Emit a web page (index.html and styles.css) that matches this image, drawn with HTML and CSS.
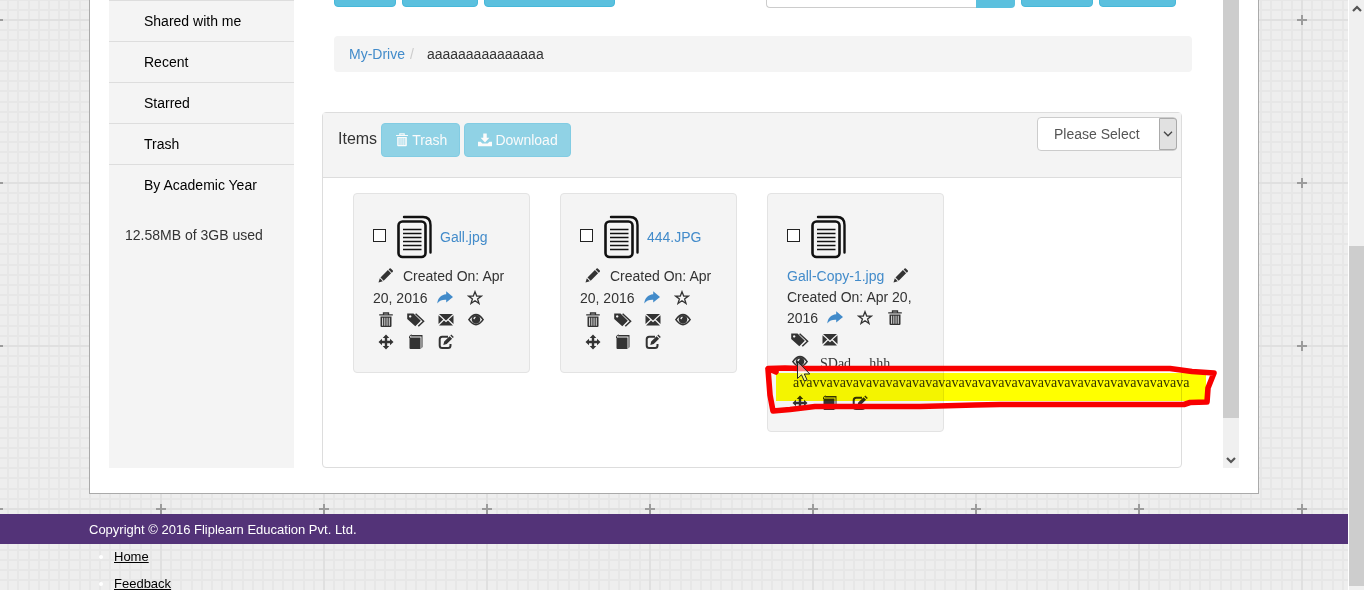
FILE: index.html
```html
<!DOCTYPE html>
<html lang="en">
<head>
<meta charset="utf-8">
<title>My-Drive</title>
<link rel="stylesheet" href="styles.css">
</head>
<body>
<svg class="sprite" aria-hidden="true">
  <symbol id="docs" viewBox="0 0 36 44">
    <rect x="1.5" y="6.5" width="27" height="35.5" rx="4" fill="none" stroke="#111" stroke-width="2.6"/>
    <path d="M7 2H26Q33.5 2 33.5 10V37.5" fill="none" stroke="#111" stroke-width="2.4" stroke-linecap="round"/>
    <path d="M6 14.5H24.500M6 18.500H24.500M6 22.500H24.500M6 26.500H24.500M6 30.500H24.500M6 34.500H24.500" stroke="#111" stroke-width="1.6"/>
  </symbol>
  <symbol id="pencil" viewBox="0 0 16 16"><path d="M.5 14.500l1.300-4.300 3 3zM2.500 9.500L9.900 2.100l3.200 3.200L5.700 12.700zM10.600 1.500l1-1q.6-.5 1.200 0l2 2q.5.6 0 1.200l-1 1z"/></symbol>
  <symbol id="share" viewBox="0 0 16 16"><path d="M9.200 1.300L16 6.900 9.200 12.500V9.700C5.500 9.500 2.500 10.300.3 13.500.6 8.500 3.800 4.500 9.200 4.200z"/></symbol>
  <symbol id="star" viewBox="0 0 16 16"><path d="M8 1.700L9.700 6.100H14.300L10.600 8.900 12 13.500 8 10.700 4 13.500 5.400 8.900 1.700 6.100H6.300z" fill="none" stroke="currentColor" stroke-width="1.300"/></symbol>
  <symbol id="trash" viewBox="0 0 16 16"><path d="M5.500 2.500V1h5v1.500M1.200 2.900h13.600" fill="none" stroke="currentColor" stroke-width="1.300"/><path d="M2.500 4.500h11V14q0 1-1 1h-9q-1 0-1-1zM4.200 5.800V13.800h.9V5.800zM6.400 5.800V13.800h.9V5.800zM8.600 5.800V13.800h.9V5.800zM10.800 5.800V13.800h.9V5.800z" fill-rule="evenodd"/></symbol>
  <symbol id="tags" viewBox="0 0 18 16"><path d="M.2 1.500H6.500L13.800 8.800 8.300 14.300.2 7zM3.200 3.200a1.200 1.200 0 1 0 .01 0z" fill-rule="evenodd"/><path d="M8.600 1.800L16.600 9.200 11.300 14.300" fill="none" stroke="currentColor" stroke-width="1.500"/></symbol>
  <symbol id="mail" viewBox="0 0 16 16"><path d="M1 2H15L8 8.400zM.5 3.200L5.200 7.600 .5 12zM15.500 3.200L10.800 7.600l4.700 4.400zM1 13.500L6 8.500l2 1.800 2-1.800 5 5z"/></symbol>
  <symbol id="eye" viewBox="0 0 16 16"><path d="M.9 7.600Q8-2.400 15.100 7.600 8 17.600.9 7.600z" fill="none" stroke="currentColor" stroke-width="1.600"/><path d="M8 3.100a4.300 4.300 0 1 0 .01 0zM7.300 4.500q-2 .6-2 2.500l1.400.2q0-1.200 1-1.500z" fill-rule="evenodd"/></symbol>
  <symbol id="move" viewBox="0 0 16 16"><path d="M8 .5L11.300 4H9.200v2.800H12V4.700L15.500 8 12 11.300V9.200H9.200V12h2.100L8 15.500 4.700 12h2.100V9.200H4v2.100L.5 8 4 4.700v2.100h2.800V4H4.700z"/></symbol>
  <symbol id="book" viewBox="0 0 16 16"><path d="M3.500 1H14.500V13L13.500 14.500V2.600H3zM1.500 3.400H12.500V15H2.500q-1 0-1-1z"/><path d="M1.500 4V3Q1.500 1 4 1" fill="none" stroke="currentColor"/></symbol>
  <symbol id="edit" viewBox="0 0 16 16"><path d="M10 2.700H4.200Q1.700 2.700 1.700 5.200V11.500Q1.700 14 4.200 14H10Q12.500 14 12.500 11.500V10" fill="none" stroke="currentColor" stroke-width="2"/><path d="M5.300 11L6.200 7.600l5.400-5.400 2.500 2.500L8.700 10.100zM12.300 1.500L13.300.5l2.500 2.400-1 1z"/></symbol>
  <symbol id="download" viewBox="0 0 16 16"><path d="M6 .5h4v5h3L8 10.800 3 5.500h3z"/><path d="M0 10h3l2 2h6l2-2h3v5H0z"/></symbol>
  <symbol id="chevron" viewBox="0 0 10 6"><path d="M1 .8l4 4 4-4" fill="none" stroke="currentColor" stroke-width="1.300"/></symbol>
  <symbol id="chevron-bold" viewBox="0 0 10 7"><path d="M1 1l4 4 4-4" fill="none" stroke="currentColor" stroke-width="2.200"/></symbol>
</svg>

<div class="page">
  <div class="frame">
    <nav class="sidebar" aria-label="Drive">
      <ul class="menu">
        <li><a href="#">Shared with me</a></li>
        <li><a href="#">Recent</a></li>
        <li><a href="#">Starred</a></li>
        <li><a href="#">Trash</a></li>
        <li><a href="#">By Academic Year</a></li>
      </ul>
      <p class="usage">12.58MB of 3GB used</p>
    </nav>

    <main class="content">
      <div class="toolbar">
        <button class="btn w62" aria-label="New"></button>
        <button class="btn w76" aria-label="Upload"></button>
        <button class="btn w131" aria-label="Create folder"></button>
        <form class="search">
          <input type="text" aria-label="Search">
          <button class="search-btn" type="button" aria-label="Search"></button>
        </form>
        <button class="btn w72" aria-label="List"></button>
        <button class="btn w77" aria-label="Grid"></button>
      </div>

      <nav class="breadcrumb" aria-label="Breadcrumb">
        <a href="#">My-Drive</a><span class="slash">/</span><span>aaaaaaaaaaaaaaa</span>
      </nav>

      <section class="panel">
        <header class="panel-head">
          <div class="bulk">
            <span class="title">Items</span>
            <button class="btn labelled" disabled><svg class="ico"><use href="#trash"/></svg>Trash</button>
            <button class="btn labelled" disabled><svg class="ico"><use href="#download"/></svg>Download</button>
          </div>
          <div class="picker">
            <select aria-label="Action"><option>Please Select</option></select>
            <span class="picker-arrow"><svg><use href="#chevron"/></svg></span>
          </div>
        </header>

        <div class="cards">
          <article class="card">
            <div class="row head"><input type="checkbox" aria-label="Select Gall.jpg"><svg class="docs"><use href="#docs"/></svg><a href="#">Gall.jpg</a></div>
            <div class="row"><button class="act" aria-label="Rename"><svg class="ico"><use href="#pencil"/></svg></button><span>Created On: Apr</span></div>
            <div class="row"><span>20, 2016</span><button class="act share" aria-label="Share"><svg class="ico"><use href="#share"/></svg></button><button class="act" aria-label="Star"><svg class="ico"><use href="#star"/></svg></button></div>
            <div class="row"><button class="act" aria-label="Trash"><svg class="ico"><use href="#trash"/></svg></button><button class="act" aria-label="Tags"><svg class="ico wide"><use href="#tags"/></svg></button><button class="act" aria-label="Mail"><svg class="ico"><use href="#mail"/></svg></button><button class="act" aria-label="View"><svg class="ico"><use href="#eye"/></svg></button></div>
            <div class="row"><button class="act" aria-label="Move"><svg class="ico"><use href="#move"/></svg></button><button class="act" aria-label="Copy"><svg class="ico"><use href="#book"/></svg></button><button class="act" aria-label="Edit"><svg class="ico"><use href="#edit"/></svg></button></div>
          </article>

          <article class="card">
            <div class="row head"><input type="checkbox" aria-label="Select 444.JPG"><svg class="docs"><use href="#docs"/></svg><a href="#">444.JPG</a></div>
            <div class="row"><button class="act" aria-label="Rename"><svg class="ico"><use href="#pencil"/></svg></button><span>Created On: Apr</span></div>
            <div class="row"><span>20, 2016</span><button class="act share" aria-label="Share"><svg class="ico"><use href="#share"/></svg></button><button class="act" aria-label="Star"><svg class="ico"><use href="#star"/></svg></button></div>
            <div class="row"><button class="act" aria-label="Trash"><svg class="ico"><use href="#trash"/></svg></button><button class="act" aria-label="Tags"><svg class="ico wide"><use href="#tags"/></svg></button><button class="act" aria-label="Mail"><svg class="ico"><use href="#mail"/></svg></button><button class="act" aria-label="View"><svg class="ico"><use href="#eye"/></svg></button></div>
            <div class="row"><button class="act" aria-label="Move"><svg class="ico"><use href="#move"/></svg></button><button class="act" aria-label="Copy"><svg class="ico"><use href="#book"/></svg></button><button class="act" aria-label="Edit"><svg class="ico"><use href="#edit"/></svg></button></div>
          </article>

          <article class="card">
            <div class="row head"><input type="checkbox" aria-label="Select Gall-Copy-1.jpg"><svg class="docs"><use href="#docs"/></svg></div>
            <div class="row"><a href="#">Gall-Copy-1.jpg</a><button class="act" aria-label="Rename"><svg class="ico"><use href="#pencil"/></svg></button></div>
            <div class="row tight"><span>Created On: Apr 20,</span></div>
            <div class="row"><span>2016</span><button class="act share" aria-label="Share"><svg class="ico"><use href="#share"/></svg></button><button class="act" aria-label="Star"><svg class="ico"><use href="#star"/></svg></button><button class="act" aria-label="Trash"><svg class="ico"><use href="#trash"/></svg></button></div>
            <div class="row"><button class="act" aria-label="Tags"><svg class="ico wide"><use href="#tags"/></svg></button><button class="act" aria-label="Mail"><svg class="ico"><use href="#mail"/></svg></button></div>
            <div class="row"><button class="act" aria-label="View"><svg class="ico"><use href="#eye"/></svg></button><span class="note words"><span>SDad</span><span>hhh</span></span></div>
            <div class="row tight"><span class="note long">avavvavavavavavavavavavavavavavavavavavavavavavavavavavavava</span></div>
            <div class="row tighter"><button class="act" aria-label="Move"><svg class="ico"><use href="#move"/></svg></button><button class="act" aria-label="Copy"><svg class="ico"><use href="#book"/></svg></button><button class="act" aria-label="Edit"><svg class="ico"><use href="#edit"/></svg></button></div>
            <svg class="marker highlight" viewBox="763 355 460 60" aria-hidden="true"><path d="M776 373H1206V401H776z" fill="#ff0"/></svg>
            <svg class="marker" viewBox="763 355 460 60" aria-hidden="true">
              <path d="M776 372L768 368.500 785 368 800 368.500H1170L1192 371.500 1214 373 1208 388 1207 402 1190 402.500 1184 404.500H1000L975 405 920 406.500H815L790 409.500 773 411 770 395 768 369" fill="none" stroke="#f80000" stroke-width="5.600" stroke-linejoin="round" stroke-linecap="round"/>
              <path d="M797.500 361.500V378.500L801.500 374.800 804.300 381 807 379.800 804.300 374H809.800z" fill="#fff" fill-opacity=".5" stroke="#222"/>
            </svg>
          </article>
        </div>
      </section>
    </main>

    <div class="inner-scroll" aria-hidden="true"><span class="thumb"></span><svg class="arrow"><use href="#chevron-bold"/></svg></div>
  </div>

  <footer class="footer">
    <div class="band"><p>Copyright © 2016 Fliplearn Education Pvt. Ltd.</p></div>
    <ul class="links">
      <li><a href="#">Home</a></li>
      <li><a href="#">Feedback</a></li>
    </ul>
  </footer>
</div>

<div class="window-scroll" aria-hidden="true"><svg class="arrow up"><use href="#chevron-bold"/></svg><span class="thumb"></span></div>
</body>
</html>
```

FILE: styles.css
```css
* { box-sizing: border-box; }

body {
  margin: 0;
  display: flex;
  height: 100vh;
  overflow: hidden;
  font: 14px/20px "Liberation Sans", Arial, sans-serif;
  color: #333;
  background: #fff;
}

a { color: #428bca; text-decoration: none; }
button { font: inherit; padding: 0; border: 0; background: none; color: inherit; }
ul, p { margin: 0; padding: 0; }
.sprite { display: none; }

.page {
  flex: 1;
  min-width: 0;
  overflow: hidden;
  background: #eee url("data:image/svg+xml,%3Csvg xmlns='http://www.w3.org/2000/svg' width='163' height='163'%3E%3Cg fill='none' stroke='%23e7e7e7' stroke-width='2'%3E%3Cpath d='M1 0V163M11 0V163M21 0V163M31 0V163M41 0V163M51 0V163M62 0V163M72 0V163M92 0V163M102 0V163M113 0V163M123 0V163M133 0V163M143 0V163M153 0V163'/%3E%3Cpath d='M0 1H163M0 11H163M0 21H163M0 31H163M0 41H163M0 51H163M0 62H163M0 72H163M0 92H163M0 102H163M0 113H163M0 123H163M0 133H163M0 143H163M0 153H163'/%3E%3Cpath d='M82 0V163M0 82H163' stroke='%23e0e0e0'/%3E%3Cpath d='M82 77V87M77 82H87' stroke='%239c9c9c'/%3E%3C/g%3E%3C/svg%3E") 79px -62px;
}

.frame {
  display: flex;
  max-width: 1170px;
  margin: 0 auto 20px;
  padding: 0 19px 25px;
  background: #fff;
  border: 1px solid #aaa;
  border-top: 0;
}

/* Sidebar */
.sidebar { width: 185px; background: #f4f4f4; }
.menu { list-style: none; }
.menu li { border-top: 1px solid #ddd; }
.menu a { display: block; padding: 10px 0 10px 35px; color: #000; }
.usage { padding: 20px 16px; }

/* Main column */
.content { flex: 1; min-width: 0; padding-left: 28px; }

.toolbar {
  display: flex;
  align-items: flex-end;
  gap: 6px;
  height: 8px;
  padding: 0 47px 0 12px;
  overflow: hidden;
}
.btn {
  height: 34px;
  margin-bottom: 1px;
  border: 1px solid #46b8da;
  border-radius: 4px;
  background: #5bc0de;
  color: #fff;
}
.w62 { width: 62px; }
.w72 { width: 72px; }
.w76 { width: 76px; }
.w77 { width: 77px; }
.w131 { width: 131px; }
.search { display: flex; margin-left: auto; }
.search input {
  width: 210px;
  height: 34px;
  border: 1px solid #ccc;
  border-right: 0;
  border-radius: 4px 0 0 4px;
}
.search-btn { width: 39px; background: #5bc0de; border-radius: 0 4px 4px 0; }

.breadcrumb {
  display: flex;
  margin: 28px 31px 40px 12px;
  padding: 8px 15px;
  border-radius: 4px;
  background: #f4f4f4;
}
.slash { padding: 0 13px 0 5px; color: #ccc; }

.panel { margin-right: 41px; border: 1px solid #ddd; border-radius: 4px; }
.panel-head {
  display: flex;
  align-items: flex-start;
  justify-content: space-between;
  padding: 4px 4px 20px 15px;
  background: #f4f4f4;
  border-bottom: 1px solid #ddd;
}
.bulk { display: flex; gap: 4px; margin-top: 6px; }
.title { font-size: 16px; line-height: 32px; }
.labelled {
  display: flex;
  align-items: center;
  gap: 3px;
  margin-bottom: 0;
  padding: 0 12px;
  opacity: 0.65;
}
.labelled .ico { width: 14px; height: 14px; margin-left: 1px; }

.picker { position: relative; }
.picker select {
  display: block;
  width: 140px;
  height: 34px;
  padding: 0 16px;
  appearance: none;
  font: inherit;
  color: #555;
  background: #fff;
  border: 1px solid #ccc;
  border-radius: 4px;
}
.picker-arrow {
  position: absolute;
  inset: 1px 0 1px auto;
  display: grid;
  place-items: center;
  width: 18px;
  color: #444;
  background: #e1e1e1;
  border: 1px solid #aaa;
  border-radius: 0 3px 3px 0;
  pointer-events: none;
}
.picker-arrow svg { width: 10px; height: 6px; }

/* File cards */
.cards {
  display: grid;
  grid-template-columns: repeat(4, 1fr);
  align-items: start;
  gap: 30px;
  padding: 15px 30px 35px;
}
.card {
  position: relative;
  min-width: 0;
  padding: 19px;
  background: #f4f4f4;
  border: 1px solid #e3e3e3;
  border-radius: 4px;
}
.row { display: flex; align-items: center; gap: 4px; height: 22px; white-space: nowrap; }
.tight { height: 20px; }
.tighter { height: 19px; }
.head { gap: 8px; height: 48px; margin-bottom: 4px; }
.head input {
  appearance: none;
  width: 13px;
  height: 13px;
  margin: 0 3px 3px 0;
  border: 1px solid #222;
  background: #fff;
}
.docs { width: 36px; height: 44px; }
.docs + a { margin-left: -1px; }
.act { display: grid; place-items: center; width: 26px; height: 20px; }
.share { color: #428bca; }
.ico { width: 16px; height: 16px; fill: currentColor; }
.wide { width: 18px; }
.note { font-family: "Liberation Serif", "Times New Roman", serif; }
.words { display: flex; gap: 18px; padding: 4px 0 0 3px; }
.long { padding-left: 6px; }

.marker {
  position: absolute;
  left: -5px;
  top: 161px;
  z-index: 1;
  width: 460px;
  height: 60px;
  pointer-events: none;
}
.highlight { mix-blend-mode: multiply; }

/* Scroll tracks */
.inner-scroll {
  display: flex;
  flex-direction: column;
  justify-content: space-between;
  align-items: center;
  width: 16px;
  padding-bottom: 4px;
  background: #f0f0f0;
}
.inner-scroll .thumb { width: 100%; height: 90%; background: #cdcdcd; }
.arrow { width: 10px; height: 7px; color: #555; }
.window-scroll {
  display: grid;
  grid-template-rows: 246fr 340fr 4fr;
  width: 16px;
  border-left: 1px solid #fff;
  background: #f0f0f0;
}
.window-scroll .thumb { background: #cdcdcd; }
.up { margin: 5px 0 0 3px; transform: rotate(180deg); }

/* Footer */
.footer { font-size: 13px; }
.band { padding-top: 2px; background: #533378; color: #fff; }
.band p { max-width: 1170px; margin: 0 auto; line-height: 28px; }
.links { max-width: 1170px; margin: -1px auto 0; padding-left: 25px; color: #fff; line-height: 27px; }
.links a { color: #000; text-decoration: underline; }
```
